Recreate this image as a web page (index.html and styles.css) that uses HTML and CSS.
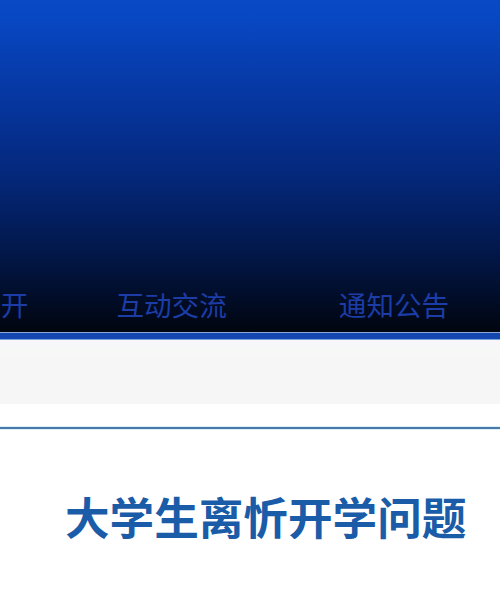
FILE: index.html
```html
<!DOCTYPE html>
<html lang="zh-CN">
<head>
<meta charset="utf-8">
<title>大学生离忻开学问题</title>
<link rel="stylesheet" href="styles.css">
</head>
<body>
<header class="header">
  <nav class="nav">
    <a class="nav-item item-1" href="#">信息公开</a>
    <a class="nav-item item-2" href="#">互动交流</a>
    <a class="nav-item item-3" href="#">通知公告</a>
  </nav>
</header>
<div class="band"></div>
<div class="subbar"></div>
<div class="gap"></div>
<div class="rule"></div>
<main class="content">
  <h1 class="title">大学生离忻开学问题</h1>
</main>
</body>
</html>
```

FILE: styles.css
```css
html, body {
  margin: 0;
  padding: 0;
  background: #ffffff;
  overflow: hidden;
}
body {
  width: 500px;
  font-family: "Noto Sans CJK SC", "Noto Sans", sans-serif;
}
.header {
  height: 332px;
  background: linear-gradient(to bottom, #0849c5 0%, #0847c2 6%, #0636a0 30%, #042676 55%, #021645 78%, #010b22 92%, #00050f 100%);
  display: flex;
  flex-direction: column;
  justify-content: flex-end;
  overflow: hidden;
}
.nav {
  display: flex;
  white-space: nowrap;
  padding-bottom: 14px;
}
.nav-item {
  font-size: 27.6px;
  line-height: 28px;
  color: #1c3ca6;
  text-decoration: none;
  flex: none;
}
.item-1 { margin-left: -82px; }
.item-2 { margin-left: 88px; }
.item-3 { margin-left: 112px; }
.band {
  height: 6px;
  background: #1446b0;
  border-top: 1px solid #8aa8dc;
  border-bottom: 1px solid #79a6d8;
}
.subbar {
  height: 64px;
  background: linear-gradient(to bottom, #f8f6fb 0%, #f6f8f6 18%, #f6f6f6 30%, #f6f6f6 100%);
}
.gap {
  height: 22px;
  background: #ffffff;
}
.rule {
  height: 2px;
  background: #4a78a8;
  border-top: 1px solid #d8f2fc;
  border-bottom: 1px solid #d8f2fc;
}
.content {
  padding: 62px 0 0 65px;
}
.title {
  margin: 0;
  font-size: 44.6px;
  line-height: 48px;
  font-weight: 700;
  color: #1a5ca8;
  white-space: nowrap;
}
```
